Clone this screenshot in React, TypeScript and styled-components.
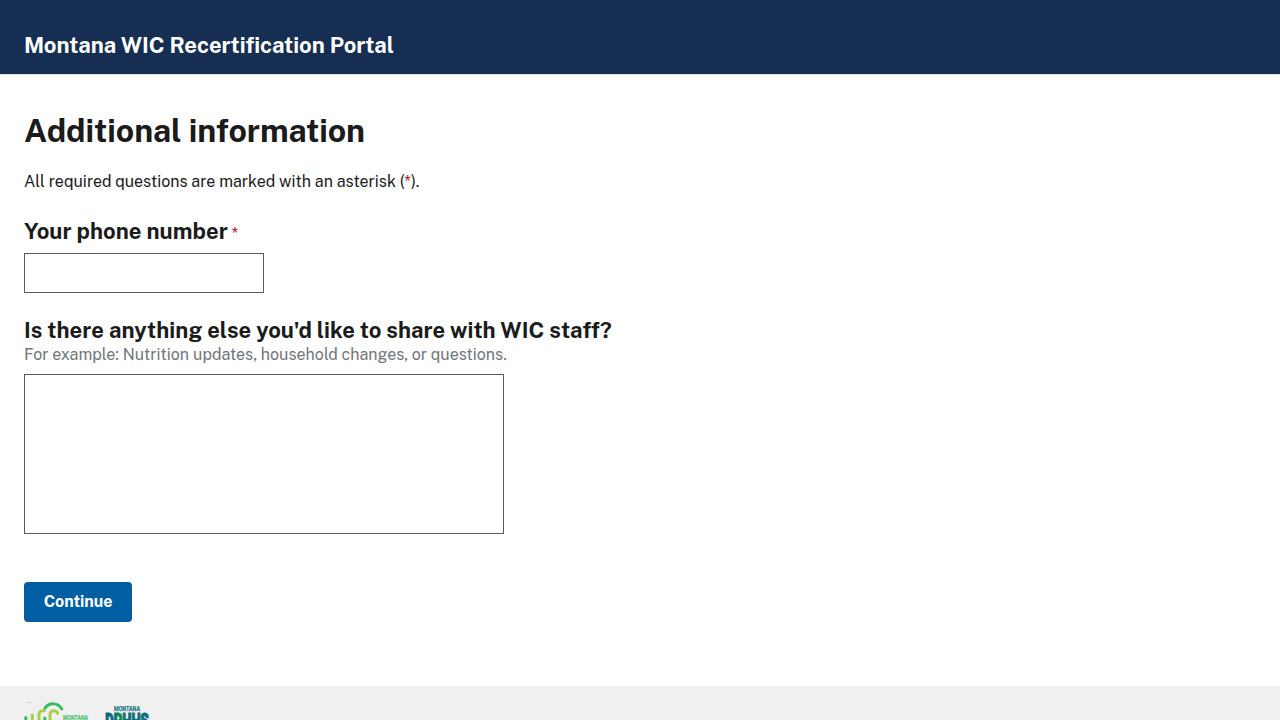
import React from 'react';
import styled, { createGlobalStyle } from 'styled-components';

const GlobalStyle = createGlobalStyle`
  *, *::before, *::after { box-sizing: border-box; }
  html, body { margin: 0; padding: 0; background: #ffffff; }
  body {
    color: #1b1b1b;
    font-family: "Public Sans", Inter, Roboto, sans-serif;
    font-size: 16px;
    line-height: 24px;
  }
`;

const Page = styled.div`
  display: flex;
  flex-direction: column;
  height: 720px;
  overflow: hidden;
`;

const Header = styled.header`
  flex: none;
  height: 75px;
  padding: 32px 24px 0;
  background: #162e51;
  border-bottom: 1px solid #dfe1e2;
`;

const SiteTitle = styled.div`
  color: #ffffff;
  font-size: 22px;
  font-weight: 700;
  letter-spacing: -0.02px;
  line-height: 26px;
  white-space: nowrap;
`;

const Main = styled.main`
  flex: none;
  height: 611px;
  padding: 36px 24px 0;
`;

const PageTitle = styled.h1`
  margin: 0;
  font-size: 32px;
  font-weight: 700;
  letter-spacing: -0.06px;
  line-height: 40px;
`;

const Intro = styled.p`
  margin: 19px 0 0;
`;

const Asterisk = styled.abbr`
  color: #b50909;
  font-size: 16px;
  font-weight: 400;
  line-height: 1;
  text-decoration: none;
  white-space: pre;
`;

const Field = styled.div<{ $top: number }>`
  display: flex;
  flex-direction: column;
  align-items: flex-start;
  margin-top: ${({ $top }) => $top}px;
`;

const Label = styled.label`
  font-size: 22px;
  font-weight: 700;
  letter-spacing: 0.04px;
  line-height: 24px;
  white-space: nowrap;
`;

const Hint = styled.span`
  margin-top: 1px;
  color: #71767a;
  letter-spacing: 0.012px;
`;

const TextInput = styled.input`
  width: 240px;
  height: 40px;
  margin-top: 10px;
  padding: 8px;
  border: 1px solid #565c65;
  border-radius: 0;
  background: #ffffff;
`;

const TextArea = styled.textarea`
  display: block;
  width: 480px;
  height: 160px;
  margin-top: 7px;
  padding: 8px;
  border: 1px solid #565c65;
  border-radius: 0;
  background: #ffffff;
  resize: none;
`;

const Button = styled.button`
  display: block;
  width: 108px;
  height: 40px;
  margin-top: 48px;
  padding: 0;
  border: 0;
  border-radius: 4px;
  background: #005ea2;
  color: #ffffff;
  font-family: inherit;
  font-size: 16px;
  font-weight: 700;
  letter-spacing: -0.05px;
  line-height: 16px;
`;

const Footer = styled.footer`
  display: flex;
  flex: 1;
  gap: 16px;
  padding: 16px 24px 0;
  background: #f0f0f0;
`;

const LogoSvg = styled.svg`
  flex: none;
  display: block;
`;

function WicLogo() {
  return (
    <LogoSvg width="65" height="40" viewBox="0 0 65 40" role="img" aria-label="Montana WIC">
      <path d="M2.5 0.6H8" stroke="#a5dfb0" strokeWidth="0.7" />
      <g fill="none" strokeWidth="3" strokeLinecap="round">
        <path d="M1.8 15.5V30" stroke="#35bb62" />
        <path d="M8.3 13V30" stroke="#a6d04a" />
        <path d="M15 30V13Q15 8.8 19 8.8H20.2" stroke="#a6d04a" />
        <path d="M26 30V13Q26 8.8 30 8.8Q33 8.8 33.6 11.3" stroke="#a6d04a" />
        <path d="M20.8 16V30" stroke="#35bb62" />
        <path d="M21 6.2C25 0.3 34 0.3 37.8 7" stroke="#35bb62" />
      </g>
      <text x="39" y="17.5" fill="#35bb62" fontFamily="Roboto, sans-serif" fontSize="6.6" fontWeight="700" textLength="25" lengthAdjust="spacingAndGlyphs">MONTANA</text>
    </LogoSvg>
  );
}

function DphhsLogo() {
  return (
    <LogoSvg width="46" height="40" viewBox="0 0 46 40" role="img" aria-label="Montana DPHHS">
      <defs>
        <linearGradient id="dphhs" x1="0" x2="1">
          <stop offset="0" stopColor="#0b6580" />
          <stop offset="0.22" stopColor="#0b6d78" />
          <stop offset="0.34" stopColor="#148a4c" />
          <stop offset="0.48" stopColor="#0b7078" />
          <stop offset="1" stopColor="#176c80" />
        </linearGradient>
      </defs>
      <text x="9" y="9" fill="#28798c" stroke="#28798c" strokeWidth="0.25" fontFamily="Roboto, sans-serif" fontSize="7" fontWeight="700" textLength="26" lengthAdjust="spacingAndGlyphs">MONTANA</text>
      <text x="0.2" y="26" fill="url(#dphhs)" stroke="url(#dphhs)" strokeWidth="1.2" fontFamily="Roboto, sans-serif" fontSize="21" fontWeight="900" textLength="43.6" lengthAdjust="spacingAndGlyphs">DPHHS</text>
    </LogoSvg>
  );
}

export default function App() {
  return (
    <>
      <GlobalStyle />
      <Page>
        <Header>
          <SiteTitle>Montana WIC Recertification Portal</SiteTitle>
        </Header>
        <Main>
          <PageTitle>Additional information</PageTitle>
          <Intro>
            All required questions are marked with an asterisk (<Asterisk>*</Asterisk>).
          </Intro>
          <Field $top={25}>
            <Label htmlFor="phone">
              Your phone number<Asterisk> *</Asterisk>
            </Label>
            <TextInput id="phone" type="tel" />
          </Field>
          <Field $top={25}>
            <Label htmlFor="comments">Is there anything else you'd like to share with WIC staff?</Label>
            <Hint>For example: Nutrition updates, household changes, or questions.</Hint>
            <TextArea id="comments" />
          </Field>
          <Button type="button">Continue</Button>
        </Main>
        <Footer>
          <WicLogo />
          <DphhsLogo />
        </Footer>
      </Page>
    </>
  );
}
